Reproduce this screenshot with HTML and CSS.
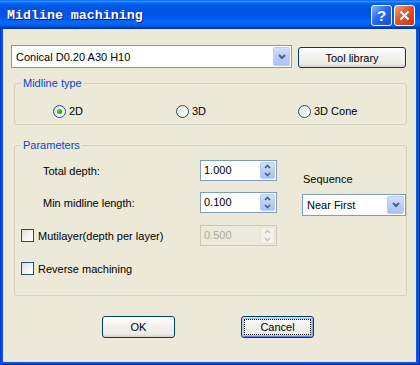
FILE: index.html
```html
<!DOCTYPE html>
<html lang="en">

<head>
  <meta charset="UTF-8">
  <title>Midline machining</title>
  <link rel="stylesheet" href="styles.css">
</head>

<body>
  <div class="window">
    <div class="titlebar">
      <span class="title">Midline machining</span>
      <div class="caption-buttons">
        <span class="cap-btn help">?</span>
        <span class="cap-btn close">
          <svg width="11" height="11" viewBox="0 0 11 11"><path d="M1.5 1.5 L9.5 9.5 M9.5 1.5 L1.5 9.5" stroke="#fff" stroke-width="2" /></svg>
        </span>
      </div>
    </div>

    <div class="client">
      <div class="top-row">
        <div class="combo tool-combo">
          <span class="combo-text">Conical D0.20 A30 H10</span>
          <span class="drop-btn">
            <svg width="8" height="6" viewBox="0 0 8 6"><polyline points="1,1 4,4 7,1" fill="none" stroke="#4d6185" stroke-width="2" /></svg>
          </span>
        </div>
        <div class="btn tool-btn">Tool library</div>
      </div>

      <div class="group midline">
        <div class="group-title">Midline type</div>
        <div class="radio-row">
          <div class="radio-item w-2d"><span class="radio checked"></span>2D</div>
          <div class="radio-item w-3d"><span class="radio"></span>3D</div>
          <div class="radio-item"><span class="radio"></span>3D Cone</div>
        </div>
      </div>

      <div class="group params">
        <div class="group-title">Parameters</div>
        <div class="params-body">
          <div class="params-left">
            <div class="field-row first">
              <div class="field-label indent">Total depth:</div>
              <div class="edit">
                <span class="edit-text">1.000</span>
                <span class="spin">
                  <span class="spin-half"><svg width="7" height="5" viewBox="0 0 7 5"><polyline points="1,4 3.5,1.5 6,4" fill="none" stroke="#4d6185" stroke-width="1.6" /></svg></span>
                  <span class="spin-half"><svg width="7" height="5" viewBox="0 0 7 5"><polyline points="1,1 3.5,3.5 6,1" fill="none" stroke="#4d6185" stroke-width="1.6" /></svg></span>
                </span>
              </div>
            </div>
            <div class="field-row second">
              <div class="field-label indent">Min midline length:</div>
              <div class="edit">
                <span class="edit-text">0.100</span>
                <span class="spin">
                  <span class="spin-half"><svg width="7" height="5" viewBox="0 0 7 5"><polyline points="1,4 3.5,1.5 6,4" fill="none" stroke="#4d6185" stroke-width="1.6" /></svg></span>
                  <span class="spin-half"><svg width="7" height="5" viewBox="0 0 7 5"><polyline points="1,1 3.5,3.5 6,1" fill="none" stroke="#4d6185" stroke-width="1.6" /></svg></span>
                </span>
              </div>
            </div>
            <div class="field-row third">
              <div class="field-label check-label"><span class="checkbox"></span>Mutilayer(depth per layer)</div>
              <div class="edit disabled">
                <span class="edit-text">0.500</span>
                <span class="spin">
                  <span class="spin-half"><svg width="7" height="5" viewBox="0 0 7 5"><polyline points="1,4 3.5,1.5 6,4" fill="none" stroke="#c9c7ba" stroke-width="1.6" /></svg></span>
                  <span class="spin-half"><svg width="7" height="5" viewBox="0 0 7 5"><polyline points="1,1 3.5,3.5 6,1" fill="none" stroke="#c9c7ba" stroke-width="1.6" /></svg></span>
                </span>
              </div>
            </div>
          </div>
          <div class="params-right">
            <div class="seq-label">Sequence</div>
            <div class="combo seq-combo">
              <span class="combo-text">Near First</span>
              <span class="drop-btn">
                <svg width="8" height="6" viewBox="0 0 8 6"><polyline points="1,1 4,4 7,1" fill="none" stroke="#4d6185" stroke-width="2" /></svg>
              </span>
            </div>
          </div>
        </div>
        <div class="reverse-row check-label"><span class="checkbox"></span>Reverse machining</div>
      </div>

      <div class="button-row">
        <div class="btn dlg-btn">OK</div>
        <div class="btn dlg-btn focused">Cancel</div>
      </div>
    </div>
  </div>
</body>

</html>
```

FILE: styles.css
```css
html,
body {
  margin: 0;
  padding: 0;
  background: #0855dd;
}

.window {
  width: 420px;
  height: 365px;
  display: flex;
  flex-direction: column;
  background: #0855dd;
  box-shadow: inset 1px 0 #0831d9, inset -1px 0 #001ea0, inset 0 -1px #001ea0;
  font-family: "Liberation Sans", Arial, sans-serif;
  font-size: 11px;
  color: #000;
}

.titlebar {
  height: 29px;
  display: flex;
  align-items: center;
  justify-content: space-between;
  padding: 0 5px 0 7px;
  background: linear-gradient(to bottom, #0058ee 0%, #3593ff 4%, #288eff 6%, #127dff 8%, #036ffc 10%, #0262ee 14%, #0057e5 20%, #0054e3 24%, #0055eb 56%, #005bf5 66%, #026afe 76%, #0062ef 86%, #0052d6 92%, #0040ab 94%, #003092 100%);
}

.title {
  font-family: "Liberation Mono", "DejaVu Sans Mono", monospace;
  font-weight: bold;
  font-size: 13.3px;
  color: #fff;
  text-shadow: 1px 1px #0a1883;
  padding-top: 2px;
}

.caption-buttons {
  display: flex;
  gap: 2px;
  padding-top: 2px;
}

.cap-btn {
  width: 21px;
  height: 21px;
  box-sizing: border-box;
  border: 1px solid #fff;
  border-radius: 3px;
  display: flex;
  align-items: center;
  justify-content: center;
}

.help {
  background: linear-gradient(135deg, #8cb4ff 0%, #2b68f0 45%, #1c4fd8 100%);
  color: #fff;
  font-family: "Liberation Sans", Arial, sans-serif;
  font-weight: bold;
  font-size: 15px;
}

.close {
  background: linear-gradient(135deg, #f0a08a 0%, #e0542e 45%, #c2350f 100%);
}

.client {
  flex: 1;
  margin: 0 4px 3px 3px;
  background: #ece9d8;
}

/* top row */
.top-row {
  display: flex;
  margin-top: 16px;
  padding-left: 8px;
  gap: 6px;
}

.combo {
  box-sizing: border-box;
  display: flex;
  align-items: center;
  background: #fff;
  border: 1px solid #7f9db9;
  padding: 1px;
}

.combo-text {
  flex: 1;
  padding-left: 3px;
}

.tool-combo {
  width: 281px;
  height: 23px;
}

.drop-btn {
  width: 17px;
  align-self: stretch;
  box-sizing: border-box;
  border: 1px solid #b9ccf5;
  border-radius: 2px;
  background: linear-gradient(to bottom, #d3e0fd, #b8cbf6 60%, #aec2f4);
  display: flex;
  align-items: center;
  justify-content: center;
}

.btn {
  box-sizing: border-box;
  border: 1px solid #003c74;
  border-radius: 3px;
  background: linear-gradient(to bottom, #ffffff 0%, #f4f3ee 40%, #ecebe6 85%, #d6d0c5 100%);
  display: flex;
  align-items: center;
  justify-content: center;
}

.tool-btn {
  width: 108px;
  height: 21px;
  margin-top: 2px;
}

/* group boxes */
.group {
  box-sizing: border-box;
  width: 393px;
  margin-left: 11px;
  border: 1px solid #d0d0bf;
  border-radius: 3px;
}

.group-title {
  width: fit-content;
  margin: -8px 0 0 6px;
  padding: 0 2px;
  height: 14px;
  line-height: 14px;
  background: #ece9d8;
  color: #0046d5;
}

.midline {
  margin-top: 15px;
  padding-bottom: 5px;
}

.radio-row {
  display: flex;
  margin-top: 13px;
  height: 16px;
  padding-left: 38px;
}

.radio-item {
  display: flex;
  align-items: center;
  gap: 3px;
}

.w-2d {
  width: 123px;
}

.w-3d {
  width: 122px;
}

.radio {
  width: 13px;
  height: 13px;
  box-sizing: border-box;
  border: 1px solid #1c5180;
  border-radius: 50%;
  background: linear-gradient(135deg, #dcdcd7 0%, #f5f5f2 60%, #ffffff 100%);
  display: flex;
  align-items: center;
  justify-content: center;
}

.radio.checked::before {
  content: "";
  width: 5px;
  height: 5px;
  border-radius: 50%;
  background: radial-gradient(circle at 35% 35%, #55d051, #21a121 60%, #1a8a1a);
}

.checkbox {
  width: 13px;
  height: 13px;
  box-sizing: border-box;
  border: 1px solid #1c5180;
  background: linear-gradient(135deg, #dcdcd7 0%, #f5f5f2 60%, #ffffff 100%);
}

.check-label {
  display: flex;
  align-items: center;
  gap: 4px;
  padding-left: 6px;
}

/* parameters */
.params {
  margin-top: 20px;
  padding-bottom: 20px;
}

.params-body {
  display: flex;
}

.params-left {
  width: 287px;
}

.field-row {
  display: grid;
  grid-template-columns: 185px 77px;
  align-items: center;
  height: 21px;
}

.field-row.first {
  margin-top: 8px;
}

.field-row.second {
  margin-top: 11px;
}

.field-row.third {
  margin-top: 12px;
}

.indent {
  padding-left: 28px;
}

.edit {
  box-sizing: border-box;
  height: 21px;
  display: flex;
  align-items: stretch;
  background: #fff;
  border: 1px solid #7f9db9;
  padding: 1px;
}

.edit-text {
  flex: 1;
  padding-left: 2px;
  line-height: 17px;
}

.spin {
  width: 15px;
  display: flex;
  flex-direction: column;
  border: 1px solid #b9ccf5;
  border-radius: 2px;
  box-sizing: border-box;
  background: linear-gradient(to bottom, #d3e0fd, #b8cbf6 60%, #aec2f4);
}

.spin-half {
  flex: 1;
  display: flex;
  align-items: center;
  justify-content: center;
}

.edit.disabled {
  background: #ebeadb;
  border-color: #c9c7ba;
  color: #aca899;
}

.edit.disabled .spin {
  background: #f3f2ea;
  border-color: #e2e0d6;
}

.params-right {
  width: 104px;
}

.seq-label {
  margin-top: 20px;
  height: 14px;
  line-height: 14px;
  padding-left: 1px;
}

.seq-combo {
  margin-top: 8px;
  height: 22px;
}

.reverse-row {
  margin-top: 16px;
  height: 13px;
}

/* dialog buttons */
.button-row {
  display: flex;
  gap: 66px;
  margin-top: 20px;
  padding-left: 99px;
}

.dlg-btn {
  width: 73px;
  height: 22px;
}

.dlg-btn.focused {
  box-shadow: inset 0 1px #cee7ff, inset 1px 0 #bcd4f6, inset -1px 0 #89ade4, inset 0 -1px #6982ee, inset 0 0 0 2px #a8c4f0;
  outline: 1px dotted #000;
  outline-offset: -4px;
}
```
